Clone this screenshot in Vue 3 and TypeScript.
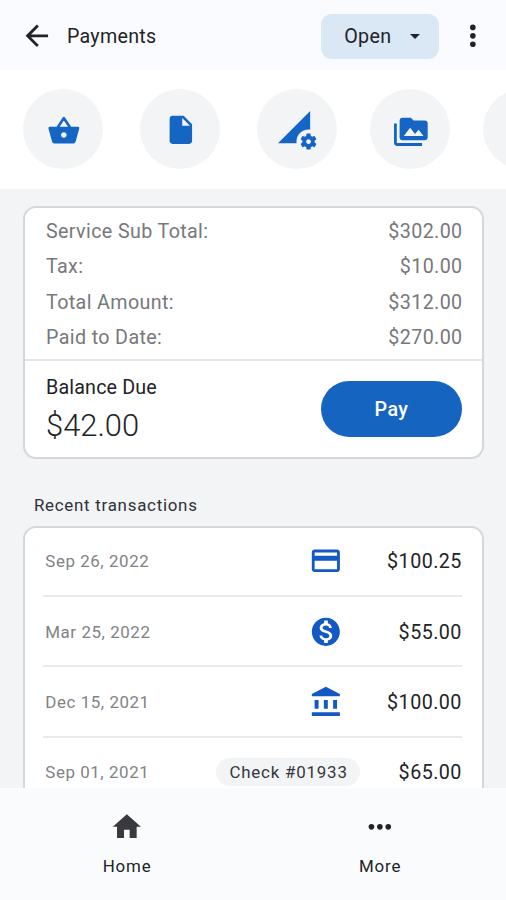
<script setup lang="ts">
interface Transaction {
  date: string
  amount: string
  method: 'card' | 'cash' | 'bank' | 'check'
  label?: string
}

interface Shortcut {
  name: string
  path: string
}

const shortcuts: Shortcut[] = [
  {
    name: 'basket',
    path: 'M17.21 9l-4.38-6.56c-.19-.28-.51-.42-.83-.42-.32 0-.64.14-.83.43L6.79 9H2c-.55 0-1 .45-1 1 0 .09.01.18.04.27l2.54 9.27c.23.84 1 1.46 1.92 1.46h13c.92 0 1.69-.62 1.93-1.46l2.54-9.27L23 10c0-.55-.45-1-1-1h-4.79zM9 9l3-4.4L15 9H9zm3 8c-1.1 0-2-.9-2-2s.9-2 2-2 2 .9 2 2-.9 2-2 2z',
  },
  {
    name: 'file',
    path: 'M6 2c-1.1 0-1.99.9-1.99 2L4 20c0 1.1.89 2 1.99 2H18c1.1 0 2-.9 2-2V8l-6-6H6zm7 7V3.5L18.5 9H13z',
  },
  {
    name: 'data',
    path: 'M18.99 11.5c.34 0 .67.03 1 .07L20 0 0 20h11.56c-.04-.33-.07-.66-.07-1 0-4.14 3.36-7.5 7.5-7.5zm3.71 7.99c.02-.16.04-.32.04-.49 0-.17-.01-.33-.04-.49l1.06-.83c.09-.08.12-.21.06-.32l-1-1.73c-.06-.11-.19-.15-.31-.11l-1.24.5c-.26-.2-.54-.37-.85-.49l-.19-1.32c-.01-.12-.12-.21-.24-.21h-2c-.12 0-.23.09-.25.21l-.19 1.32c-.3.13-.59.29-.85.49l-1.24-.5c-.11-.04-.24 0-.31.11l-1 1.73c-.06.11-.04.24.06.32l1.06.83c-.02.16-.03.32-.03.49 0 .17.01.33.03.49l-1.06.83c-.09.08-.12.21-.06.32l1 1.73c.06.11.19.15.31.11l1.24-.5c.26.2.54.37.85.49l.19 1.32c.02.12.12.21.25.21h2c.12 0 .23-.09.25-.21l.19-1.32c.3-.13.59-.29.84-.49l1.25.5c.11.04.24 0 .31-.11l1-1.73c.06-.11.03-.24-.06-.32l-1.07-.83zm-3.71 1.01c-.83 0-1.5-.67-1.5-1.5s.67-1.5 1.5-1.5 1.5.67 1.5 1.5-.67 1.5-1.5 1.5z',
  },
  {
    name: 'media',
    path: 'M2 6H0v5h.01L0 20c0 1.1.9 2 2 2h18v-2H2V6zm20-2h-8l-2-2H6c-1.1 0-1.99.9-1.99 2L4 16c0 1.1.9 2 2 2h16c1.1 0 2-.9 2-2V6c0-1.1-.9-2-2-2zM7 15l4.5-6 3.5 4.51 2.5-3.01L21 15H7z',
  },
  { name: 'next', path: '' },
]

const totals = [
  { label: 'Service Sub Total:', value: '$302.00' },
  { label: 'Tax:', value: '$10.00' },
  { label: 'Total Amount:', value: '$312.00' },
  { label: 'Paid to Date:', value: '$270.00' },
]

const methodIcons: Record<string, string> = {
  card: 'M20 4H4c-1.11 0-1.99.89-1.99 2L2 18c0 1.11.89 2 2 2h16c1.11 0 2-.89 2-2V6c0-1.11-.89-2-2-2zm0 14H4v-6h16v6zm0-9.6H4V6h16v2.4z',
  cash: 'M12 2C6.48 2 2 6.48 2 12s4.48 10 10 10 10-4.48 10-10S17.52 2 12 2zm1.41 16.09V20h-2.67v-1.93c-1.71-.36-3.16-1.46-3.27-3.4h1.96c.1 1.05.82 1.87 2.65 1.87 1.96 0 2.4-.98 2.4-1.59 0-.83-.44-1.61-2.67-2.14-2.48-.6-4.18-1.62-4.18-3.67 0-1.72 1.39-2.84 3.11-3.21V4h2.67v1.95c1.86.45 2.79 1.86 2.85 3.39H14.3c-.05-1.11-.64-1.87-2.22-1.87-1.5 0-2.4.68-2.4 1.64 0 .84.65 1.39 2.67 1.91s4.18 1.39 4.18 3.91c-.01 1.83-1.38 2.83-3.12 3.16z',
  bank: 'M12 1.2L2 6.4V8h20V6.4L12 1.2zM4 10.6v6.4h2.8v-6.4H4zm6.6 0v6.4h2.8v-6.4h-2.8zm6.6 0v6.4H20v-6.4h-2.8zM2 19.4V22h20v-2.6H2z',
}

const transactions: Transaction[] = [
  { date: 'Sep 26, 2022', amount: '$100.25', method: 'card' },
  { date: 'Mar 25, 2022', amount: '$55.00', method: 'cash' },
  { date: 'Dec 15, 2021', amount: '$100.00', method: 'bank' },
  { date: 'Sep 01, 2021', amount: '$65.00', method: 'check', label: 'Check #01933' },
]
</script>

<template>
  <div class="screen">
    <header class="topbar">
      <svg class="icon back" viewBox="0 0 24 24"><path d="M20 11H7.83l5.59-5.59L12 4l-8 8 8 8 1.41-1.41L7.83 13H20v-2z" /></svg>
      <h1 class="title">Payments</h1>
      <button class="status">
        <span>Open</span>
        <svg class="caret" viewBox="0 0 24 24"><path d="M7 10l5 5 5-5z" /></svg>
      </button>
      <svg class="icon" viewBox="0 0 24 24"><circle cx="12" cy="6" r="2" /><circle cx="12" cy="12" r="2" /><circle cx="12" cy="18" r="2" /></svg>
    </header>

    <nav class="shortcuts">
      <button v-for="s in shortcuts" :key="s.name" class="shortcut" :class="s.name">
        <svg v-if="s.path" class="icon" viewBox="0 0 24 24"><path :d="s.path" /></svg>
      </button>
    </nav>

    <main class="content">
      <section class="card">
        <dl class="totals">
          <div v-for="t in totals" :key="t.label" class="total">
            <dt>{{ t.label }}</dt>
            <dd>{{ t.value }}</dd>
          </div>
        </dl>
        <div class="balance">
          <div>
            <div class="balance-label">Balance Due</div>
            <div class="balance-value">$42.00</div>
          </div>
          <button class="pay">Pay</button>
        </div>
      </section>

      <h2 class="heading">Recent transactions</h2>

      <section class="card list">
        <div v-for="t in transactions" :key="t.date" class="row">
          <span class="date">{{ t.date }}</span>
          <span v-if="t.label" class="tag">{{ t.label }}</span>
          <svg v-else class="icon method" viewBox="0 0 24 24"><path :d="methodIcons[t.method]" /></svg>
          <span class="amount">{{ t.amount }}</span>
        </div>
      </section>
    </main>

    <footer class="tabs">
      <div class="tab">
        <svg class="icon home" viewBox="0 0 24 24"><path d="M10 20v-6h4v6h5v-8h3L12 3 2 12h3v8z" /></svg>
        <span>Home</span>
      </div>
      <div class="tab">
        <svg class="icon" viewBox="0 0 24 24"><circle cx="6" cy="12" r="2" /><circle cx="12" cy="12" r="2" /><circle cx="18" cy="12" r="2" /></svg>
        <span>More</span>
      </div>
    </footer>
  </div>
</template>

<style>
body {
  margin: 0;
}
</style>

<style scoped>
.screen {
  width: 506px;
  height: 900px;
  display: flex;
  flex-direction: column;
  overflow: hidden;
  background: #f2f4f6;
  color: #222327;
  font-family: Roboto, 'Liberation Sans', sans-serif;
  font-size: 19.7px;
}
button {
  border: 0;
  padding: 0;
  font: inherit;
  color: inherit;
}
.icon {
  width: 33.7px;
  height: 33.7px;
  flex: none;
  display: block;
  fill: currentColor;
}
.topbar {
  height: 70px;
  flex: none;
  box-sizing: border-box;
  display: flex;
  align-items: center;
  padding: 2px 16.2px 0 20px;
  background: #fafbfe;
}
.title {
  margin: 0 auto 0 13.2px;
  font-size: 19.7px;
  font-weight: 450;
  letter-spacing: 0.28px;
}
.status {
  width: 118px;
  height: 45px;
  margin-right: 17px;
  box-sizing: border-box;
  padding: 0 11.7px 0 23px;
  display: flex;
  align-items: center;
  justify-content: space-between;
  border-radius: 11px;
  background: #dae7f4;
  font-weight: 450;
  letter-spacing: 0.4px;
}
.caret {
  width: 24px;
  height: 24px;
  fill: currentColor;
}
.shortcuts {
  height: 118.5px;
  flex: none;
  display: flex;
  align-items: center;
  padding-left: 23px;
  background: #fff;
}
.shortcut {
  width: 80px;
  height: 80px;
  flex: none;
  display: flex;
  align-items: center;
  justify-content: center;
  border-radius: 50%;
  background: #f2f4f6;
  color: #1565c4;
}
.file,
.data {
  margin-left: 37px;
}
.media,
.next {
  margin-left: 33.2px;
}
.basket .icon {
  margin: 3.5px 0 0 2px;
}
.file .icon {
  margin: 2px 0 0 1px;
}
.data .icon {
  width: 38.6px;
  height: 38.6px;
  margin: 2px 0 0 1px;
}
.media .icon {
  margin: 6px 0 0 1px;
}
.content {
  flex: 1;
  min-height: 0;
  overflow: hidden;
  padding: 17.5px 22px 0 23px;
}
.card {
  border: 2px solid #d5d7da;
  border-radius: 13px;
  background: #fff;
}
.totals {
  margin: 0;
  padding: 6.2px 19.5px 4.2px 21px;
  border-bottom: 2px solid #e4e5e7;
  color: #77787b;
  letter-spacing: 0.37px;
}
.total {
  display: flex;
  justify-content: space-between;
  line-height: 35.15px;
}
.total dd {
  margin: 0;
}
.balance {
  height: 96px;
  display: flex;
  align-items: center;
  justify-content: space-between;
  padding: 0 20px 0 21px;
}
.balance-label {
  line-height: 34px;
  font-weight: 450;
  font-size: 19.7px;
  letter-spacing: 0.16px;
}
.balance-value {
  line-height: 42px;
  font-size: 30.9px;
  font-weight: 350;
  letter-spacing: 0;
}
.pay {
  width: 141px;
  height: 56px;
  border-radius: 28px;
  background: #1565c0;
  color: #fff;
  font-weight: 500;
  letter-spacing: 0.4px;
}
.heading {
  margin: 35px 0 9px 10.9px;
  line-height: 23px;
  font-size: 16.9px;
  font-weight: 450;
  letter-spacing: 0.74px;
  color: #303136;
}
.list {
  padding: 0 20.5px 0 18px;
}
.row {
  height: 70.3px;
  box-sizing: border-box;
  display: flex;
  align-items: center;
  padding: 1px 0 0 2px;
  border-bottom: 2px solid #e8e9ea;
}
.row:first-child {
  margin-top: -1.4px;
}
.date {
  margin-right: auto;
  padding-left: 0.3px;
  font-size: 16.9px;
  letter-spacing: 0.57px;
  color: #818285;
}
.method {
  margin-right: 17.3px;
  color: #1259c3;
}
.tag {
  height: 28px;
  line-height: 28px;
  box-sizing: border-box;
  width: 144px;
  padding-left: 13px;
  border-radius: 14px;
  background: #f2f4f6;
  font-size: 16.9px;
  font-weight: 450;
  letter-spacing: 0.8px;
  color: #36373b;
}
.amount {
  width: 101.5px;
  margin-right: -0.4px;
  padding-top: 1px;
  text-align: right;
  letter-spacing: 0.46px;
}
.tabs {
  height: 112px;
  flex: none;
  display: flex;
  background: #fafbfd;
}
.tab {
  flex: 1;
  display: flex;
  flex-direction: column;
  align-items: center;
  padding-top: 22.4px;
  font-size: 16.9px;
  font-weight: 450;
  line-height: 24px;
  letter-spacing: 0.8px;
}
.tab span {
  margin-top: 9.9px;
  padding-left: 1.2px;
}
.home {
  color: #3a3940;
}
</style>
